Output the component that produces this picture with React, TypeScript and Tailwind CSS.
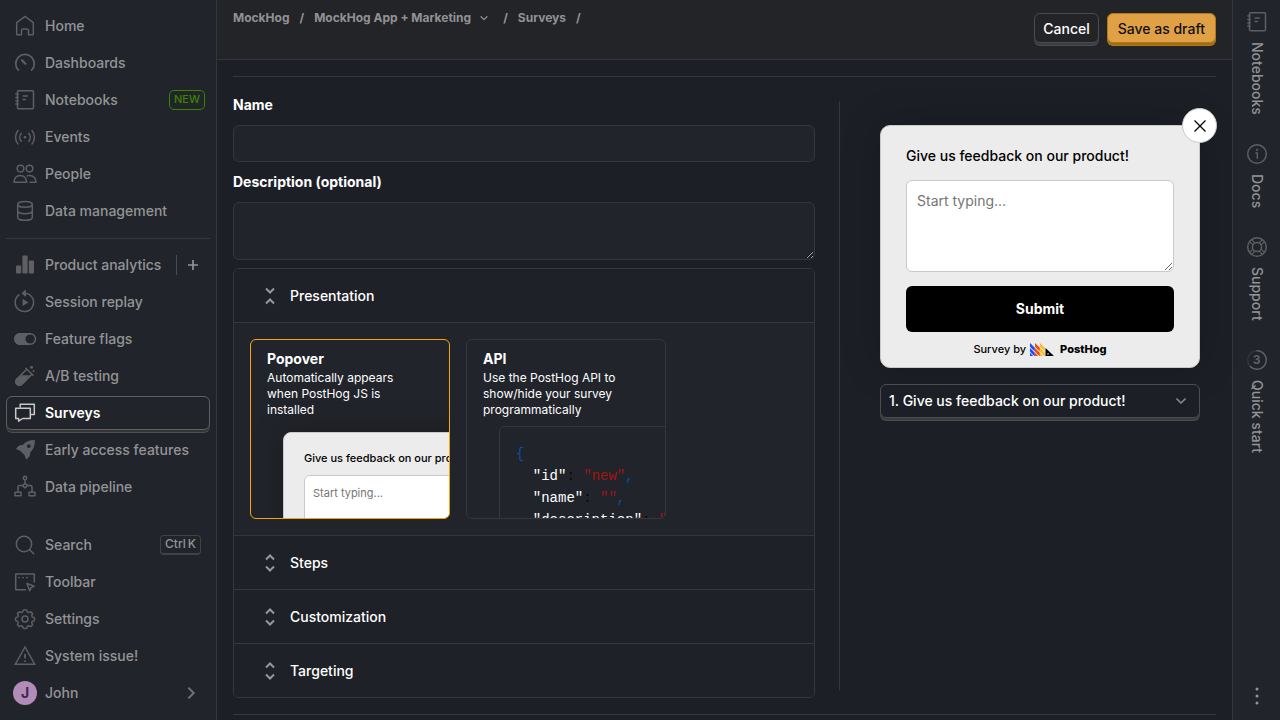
import { useState, type ReactNode } from 'react'

const stroke = {
  fill: 'none',
  stroke: 'currentColor',
  strokeWidth: 1.5,
  strokeLinecap: 'round',
  strokeLinejoin: 'round',
} as const

function Icon({ children, className = 'size-6' }: { children: ReactNode; className?: string }) {
  return (
    <svg viewBox="0 0 24 24" className={`${className} shrink-0`} {...stroke} aria-hidden="true">
      {children}
    </svg>
  )
}

const notebook = (
  <>
    <rect x="4.5" y="2.7" width="16" height="18" rx="1" />
    <path d="M2.8 6h2.4M2.8 9.5h2.4M2.8 13h2.4M2.8 16h2.4M10 8h4.5M10 11.5h2.5" strokeWidth="1.3" />
  </>
)

const icons: Record<string, ReactNode> = {
  home: <path d="M3.7 20.2V8.6L12 2.4l8.3 6.2v11.6a.6.6 0 0 1-.6.6h-4.2v-4.3a1.5 1.5 0 0 0-1.5-1.5h-4a1.5 1.5 0 0 0-1.5 1.5v4.3H4.3a.6.6 0 0 1-.6-.6Z" />,
  dashboards: (
    <>
      <path d="M5.4 19.2a9.25 9.25 0 1 1 13.2 0" strokeWidth="1.7" />
      <path d="M9 9.4l3.4 3.4" strokeWidth="2.2" />
    </>
  ),
  notebook,
  events: (
    <>
      <path d="M5 5.6a10.5 10.5 0 0 0 0 13.4M19 5.6a10.5 10.5 0 0 1 0 13.4M8.2 8.4a6 6 0 0 0 0 7.8M15.8 8.4a6 6 0 0 1 0 7.8" />
      <circle cx="12" cy="12.3" r="1.3" fill="currentColor" stroke="none" />
    </>
  ),
  people: (
    <>
      <circle cx="7.5" cy="6.6" r="3.3" />
      <circle cx="16.5" cy="6.6" r="3.3" />
      <path d="M1 20.2c0-4 2.7-6.8 6.3-6.8s6.3 2.8 6.3 6.8H1ZM14.2 13.9a6 6 0 0 1 2.5-.5c3.6 0 6.3 2.8 6.3 6.8h-6" />
    </>
  ),
  database: (
    <>
      <ellipse cx="12" cy="5.4" rx="7.3" ry="2.8" />
      <path d="M4.7 5.4v13c0 1.6 3.3 2.9 7.3 2.9s7.3-1.3 7.3-2.9v-13M4.7 12c0 1.5 3.3 2.7 7.3 2.7s7.3-1.2 7.3-2.7" />
    </>
  ),
  analytics: (
    <g fill="currentColor" stroke="none">
      <rect x="3" y="12.5" width="5.2" height="8" rx="1" />
      <rect x="9.4" y="2.5" width="5.2" height="18" rx="1" />
      <rect x="15.800" y="7.500" width="5.200" height="13" rx="1" />
    </g>
  ),
  replay: (
    <>
      <path d="M6 4.9a9.200 9.200 0 1 0 6-1.700h-1.500" />
      <path d="M12.2.8 9.6 3.2l2.6 2.500Z" fill="currentColor" />
      <path d="M9.6 8.8v7.2l5.800-3.600Z" fill="currentColor" stroke="none" />
    </>
  ),
  flags: (
    <>
      <rect x="2" y="6.7" width="20.5" height="10.6" rx="5.3" />
      <path d="M7 6.7h10a5.3 5.3 0 0 0 0 10.600H7A5.300 5.300 0 0 1 7 6.700Z" fill="currentColor" />
    </>
  ),
  testing: (
    <>
      <path d="M13.8 5.2 3.9 15.1a3.6 3.6 0 0 0 5.1 5.1l9.9-9.9M12.8 4.2l7.2 7.1" />
      <path d="M8.5 12h8l-7.5 8a3.6 3.6 0 0 1-5.1-5.1Z" fill="currentColor" />
      <circle cx="18.5" cy="3.2" r="1.5" fill="currentColor" stroke="none" />
      <circle cx="20.5" cy="7" r="1" fill="currentColor" stroke="none" />
    </>
  ),
  surveys: (
    <>
      <path d="M7.2 6V3.2h14.100v10.300h-3.200" />
      <path d="M2.7 7.2h14.600v10.300H9.600l-4 2.700v-2.700H2.700Z" />
    </>
  ),
  rocket: (
    <path
      d="M21.8 2.1c.3 5-1 9.200-4.600 12.400.4 2.900-.9 5.100-4 6.900l-1.800-4.300-4.300-4.400L3 11c1.700-3.100 4-4.400 6.700-4C12.700 3.500 16.700 2 21.800 2.100ZM15.800 6.200a1.900 1.900 0 1 0 0 3.800 1.900 1.900 0 0 0 0-3.800Z"
      fill="currentColor"
      fillRule="evenodd"
      stroke="none"
    />
  ),
  pipeline: (
    <>
      <circle cx="12" cy="3" r="1.7" />
      <path d="M12 5v3.200M9.700 10.500H6.500c-1 0-1.500.5-1.500 1.500v5M14.300 10.500h3.200c1 0 1.500.5 1.500 1.500v5M12 8.200l2.500 2.400L12 13l-2.500-2.400Z" />
      <rect x="2" y="17.3" width="6" height="3.4" />
      <rect x="16" y="17.3" width="6" height="3.4" />
    </>
  ),
  search: (
    <>
      <circle cx="11" cy="11" r="7.7" />
      <path d="m16.7 16.7 4 4" />
    </>
  ),
  toolbar: (
    <>
      <path d="M12.5 19.8H2.7V4h18.600v8" />
      <path d="M6 7.6h.1M10 7.6h.1M14 7.6h.1" strokeWidth="1.7" />
      <path d="m14 13.5 7.2 2.7-3.100 1.400-1.400 3.200Z" />
    </>
  ),
  settings: (
    <>
      <path d="M10.3 3.1 12 2.6l1.700.5.7 2 1.300.5 2-.9 1.900 1.900-.9 2 .5 1.300 2 .7.4 1.400-.4 1.700-2 .7-.5 1.300.9 2-1.900 1.900-2-.9-1.300.5-.7 2-1.700.4-1.700-.4-.7-2-1.300-.5-2 .9-1.900-1.900.9-2-.5-1.300-2-.7-.4-1.700.4-1.400 2-.7.5-1.300-.9-2 1.900-1.900 2 .9 1.300-.5Z" />
      <circle cx="12" cy="12" r="3" />
    </>
  ),
  warning: (
    <>
      <path d="M12 3 2.3 20.2h19.400Z" strokeLinejoin="miter" />
      <path d="M12 10v4.500M12 16.500v1.500" strokeWidth="1.8" strokeLinecap="butt" />
    </>
  ),
  info: (
    <>
      <circle cx="12" cy="12" r="9.3" />
      <path d="M11 11h1.300v5.200" />
      <path d="M12 7.8v.1" strokeWidth="2" />
    </>
  ),
  support: (
    <>
      <circle cx="12" cy="12" r="9.3" />
      <circle cx="12" cy="12" r="4.6" />
      <path
        d="m4.6 6.6 3.2 3.2M6.6 4.6l3 3M19.4 6.6l-3.2 3.2M17.4 4.6l-3 3M4.6 17.4l3.2-3.2M6.6 19.4l3-3M19.4 17.4l-3.2-3.2M17.4 19.4l-3-3"
        strokeWidth="1.2"
      />
    </>
  ),
  progress: (
    <>
      <circle cx="12" cy="12" r="9.3" opacity=".3" />
      <path d="M12 2.7a9.3 9.3 0 1 1-6.600 15.900" />
    </>
  ),
}

type Item = { label: string; icon: string; extra?: ReactNode; active?: boolean }

function NavItem({ label, icon, extra, active }: Item) {
  return (
    <li className="flex h-[37px] items-center">
      <a
        href="#"
        aria-current={active ? 'page' : undefined}
        className={
          active
            ? 'flex h-[34px] flex-1 items-center gap-2 rounded-md border border-[#5f6064] px-1.5 font-semibold text-white shadow-[0_2px_0_#343434,0_3px_0_#4f5053]'
            : 'flex h-[34px] flex-1 items-center gap-2 px-[7px] font-medium'
        }
      >
        <span className={active ? 'text-[#c8c8ca]' : 'text-[#5d5f64]'}>
          <Icon>{icons[icon]}</Icon>
        </span>
        {label}
      </a>
      {extra}
    </li>
  )
}

const primary: Item[] = [
  { label: 'Home', icon: 'home' },
  { label: 'Dashboards', icon: 'dashboards' },
  {
    label: 'Notebooks',
    icon: 'notebook',
    extra: (
      <span className="mr-[5px] flex h-5 items-center rounded-[5px] border border-[#388600] px-1 text-[11px] font-medium text-[#388600]">
        NEW
      </span>
    ),
  },
  { label: 'Events', icon: 'events' },
  { label: 'People', icon: 'people' },
  { label: 'Data management', icon: 'database' },
]

const products: Item[] = [
  {
    label: 'Product analytics',
    icon: 'analytics',
    extra: (
      <button type="button" aria-label="New insight" className="flex h-5 items-center border-l border-[#4a4b50] pr-[9px] pl-2">
        <Icon className="size-4">
          <path d="M12 4.5v15M4.5 12h15" strokeWidth="2.5" strokeLinecap="butt" />
        </Icon>
      </button>
    ),
  },
  { label: 'Session replay', icon: 'replay' },
  { label: 'Feature flags', icon: 'flags' },
  { label: 'A/B testing', icon: 'testing' },
  { label: 'Surveys', icon: 'surveys', active: true },
  { label: 'Early access features', icon: 'rocket' },
  { label: 'Data pipeline', icon: 'pipeline' },
]

const utilities: Item[] = [
  {
    label: 'Search',
    icon: 'search',
    extra: (
      <kbd className="mr-[9px] flex h-5 items-center gap-0.5 rounded border border-b-2 border-[#404247] px-1 font-[Inter,sans-serif] text-xs font-medium">
        <span>Ctrl</span>
        <span>K</span>
      </kbd>
    ),
  },
  { label: 'Toolbar', icon: 'toolbar' },
  { label: 'Settings', icon: 'settings' },
  { label: 'System issue!', icon: 'warning' },
]

function Sidebar() {
  return (
    <nav className="flex w-[217px] shrink-0 flex-col border-r border-[#35373e] bg-[#22242b] px-1.5 pt-[7px] pb-[9px] text-[#939496]">
      <ul className="border-b border-[#35373e] pb-[9px]">
        {primary.map((item) => (
          <NavItem key={item.label} {...item} />
        ))}
      </ul>
      <ul className="pt-[7px]">
        {products.map((item) => (
          <NavItem key={item.label} {...item} />
        ))}
      </ul>
      <ul className="mt-auto">
        {utilities.map((item) => (
          <NavItem key={item.label} {...item} />
        ))}
        <li>
          <button type="button" className="flex h-[37px] w-full items-center gap-2 pr-[11px] pl-[7px] font-medium">
            <span className="flex size-6 items-center justify-center rounded-full bg-[#b18cb8] font-bold text-[#43244f]">J</span>
            <span className="flex-1 text-left">John</span>
            <Icon className="size-4">
              <path d="m8 4 8 8-8 8" strokeWidth="3" strokeLinecap="butt" strokeLinejoin="miter" opacity=".7" />
            </Icon>
          </button>
        </li>
      </ul>
    </nav>
  )
}

const railItems = [
  { label: 'Notebooks', icon: 'notebook' },
  { label: 'Docs', icon: 'info' },
  { label: 'Support', icon: 'support' },
  { label: 'Quick start', icon: 'progress' },
]

function Rail() {
  return (
    <aside className="flex w-12 shrink-0 flex-col items-center gap-[15px] border-l border-[#35373e] bg-[#22242b] pt-2.5 pb-3 text-[#939496]">
      {railItems.map(({ label, icon }) => (
        <button key={label} type="button" className="flex flex-col items-center gap-2 pb-3 font-medium">
          <span className="relative text-[#5d5f64]">
            <Icon>{icons[icon]}</Icon>
            {icon === 'progress' && (
              <span className="absolute inset-0 flex items-center justify-center text-xs font-bold">3</span>
            )}
          </span>
          <span className="[writing-mode:vertical-rl]">{label}</span>
        </button>
      ))}
      <button type="button" aria-label="More options" className="mt-auto">
        <Icon>
          <path d="M12 5v.1M12 12v.1M12 19v.1" strokeWidth="3" />
        </Icon>
      </button>
    </aside>
  )
}

function Header() {
  return (
    <header className="flex h-[60px] items-start justify-between border-b border-[#35373e] bg-[#232428] px-4">
      <nav aria-label="Breadcrumb" className="flex items-center gap-2.5 pt-2.5 text-xs font-bold text-[#919294]">
        <a href="#">MockHog</a>
        <span>/</span>
        <a href="#" className="flex items-center gap-2">
          MockHog App + Marketing
          <Icon className="size-2.5">
            <path d="m5 9 7 7 7-7" strokeWidth="3" />
          </Icon>
        </a>
        <span className="ml-1">/</span>
        <a href="#">Surveys</a>
        <span>/</span>
      </nav>
      <div className="flex gap-2 pt-[13px]">
        <button
          type="button"
          className="h-[30px] rounded-md border border-[#4a4c50] px-2 pt-px font-medium text-white shadow-[0_2px_0_#3a3c40,0_3px_0_#4a4c50]"
        >
          Cancel
        </button>
        <button
          type="button"
          className="h-[30px] rounded-md border border-[#b17816] bg-[#e0a045] px-2.5 pt-px font-medium text-[#111] shadow-[0_2px_0_#a06c16,0_3px_0_#b17816]"
        >
          Save as draft
        </button>
      </div>
    </header>
  )
}

function PanelHeader({ label, open, onClick }: { label: string; open: boolean; onClick: () => void }) {
  return (
    <button
      type="button"
      aria-expanded={open}
      onClick={onClick}
      className="flex h-[53px] w-full items-center gap-2 bg-[#1f2128] px-6 font-medium text-white"
    >
      <span className="text-[#97989b]">
        <Icon>
          {open ? (
            <path d="m8 4.5 4 4 4-4M8 19.5l4-4 4 4" strokeWidth="2" strokeLinecap="butt" strokeLinejoin="miter" />
          ) : (
            <path d="m8 8.5 4-4 4 4M8 15.5l4 4 4-4" strokeWidth="2" strokeLinecap="butt" strokeLinejoin="miter" />
          )}
        </Icon>
      </span>
      {label}
    </button>
  )
}

function Blue({ children }: { children: ReactNode }) {
  return <span className="text-[#0451a5]">{children}</span>
}

function CodeField({ name, value }: { name: string; value: string }) {
  return (
    <>
      {'\n  '}
      <span className="text-white">{`"${name}"`}</span>
      {': '}
      <span className="text-[#a31515]">{`"${value}"`}</span>
      <Blue>,</Blue>
    </>
  )
}

function Presentation() {
  return (
    <div className="flex gap-4 border-t border-[#35373e] bg-[#22242b] p-4">
      <div className="flex h-[180px] w-[200px] flex-col overflow-hidden rounded-md border border-[#f7a501] px-4 pt-2 text-white">
        <h3 className="leading-[22px] font-bold">Popover</h3>
        <p className="pr-4 text-xs leading-4">Automatically appears when PostHog JS is installed</p>
        <div className="mt-3.5 ml-4 w-64 shrink-0 rounded-lg border border-[#c9c9c9] bg-[#ececec] px-5 pt-4 text-[11px] text-black shadow-[0_0_30px_rgba(0,0,0,0.25)]">
          <p className="leading-[18px] font-medium whitespace-nowrap">Give us feedback on our product!</p>
          <div className="mt-2 h-[74px] rounded-md border border-[#c9c9c9] bg-white px-2 py-2 leading-[18px] text-[#757575]">
            Start typing...
          </div>
        </div>
      </div>
      <div className="flex h-[180px] w-[200px] flex-col overflow-hidden rounded-md border border-[#35373e] px-4 pt-2 text-white">
        <h3 className="leading-[22px] font-bold">API</h3>
        <p className="text-xs leading-4">Use the PostHog API to show/hide your survey programmatically</p>
        <pre className="mt-2 ml-4 w-64 shrink-0 rounded-md border border-[#35373e] p-4 font-['Liberation_Mono',monospace] text-sm leading-[22px] text-[#08090b]">
          <Blue>{'{'}</Blue>
          <CodeField name="id" value="new" />
          <CodeField name="name" value="" />
          <CodeField name="description" value="" />
        </pre>
      </div>
    </div>
  )
}

function Logo() {
  return (
    <svg viewBox="0 0 24 13" className="h-[13px] w-6" aria-hidden="true">
      <path d="M0 0l4.800 4.800v3.800L0 3.800ZM0 4.900l4.800 4.800V13h-.5L0 8.700ZM0 9.800 3.200 13H0Z" fill="#1d4aff" />
      <path d="M5 0l4.800 4.800v3.800L5 3.800ZM5 4.900l4.800 4.800V13h-.5L5 8.700ZM5 9.800 8.200 13H5Z" fill="#f54e00" />
      <path d="M10 0l4.800 4.800v3.800L10 3.800ZM10 4.900l4.800 4.800V13h-.5L10 8.700ZM10 9.800l3.200 3.200H10Z" fill="#f9bd2b" />
      <path d="M15.500 5l8 7.500V13h-8ZM18 10.200a.8.8 0 1 0 0 1.600.8.8 0 0 0 0-1.600Z" fill="#000" fillRule="evenodd" />
    </svg>
  )
}

function Preview() {
  return (
    <div className="w-[352px] shrink-0 px-4 pt-8">
      <form
        onSubmit={(e) => e.preventDefault()}
        className="relative rounded-[10px] border border-[#c9c9c9] bg-[#ececec] px-[25px] pt-5 pb-2 text-black shadow-[0_0_40px_rgba(0,0,0,0.2)]"
      >
        <button
          type="button"
          aria-label="Close"
          className="absolute -top-[18px] -right-[18px] flex size-[35px] items-center justify-center rounded-full border border-[#c9c9c9] bg-white"
        >
          <svg viewBox="0 0 12 12" className="size-3" stroke="#000" strokeWidth="1.3" aria-hidden="true">
            <path d="m.5.5 11 11M11.5.5l-11 11" />
          </svg>
        </button>
        <label htmlFor="answer" className="block font-medium">
          Give us feedback on our product!
        </label>
        <textarea
          id="answer"
          placeholder="Start typing..."
          className="mt-3.5 block h-[92px] w-full rounded-md border border-[#c9c9c9] bg-white p-2.5 placeholder:text-[#757575]"
        />
        <button type="submit" className="mt-3.5 h-[46px] w-full rounded-md bg-black font-bold text-white">
          Submit
        </button>
        <a href="#" className="mt-2 flex h-[19px] items-center justify-center gap-1 text-[11px] font-medium">
          Survey by
          <span className="flex items-center gap-1.5">
            <Logo />
            <span className="leading-none font-extrabold">PostHog</span>
          </span>
        </a>
      </form>
      <div className="relative mt-4">
        <select
          aria-label="Question"
          className="h-[34px] w-full appearance-none rounded-md border border-[#4a4c50] bg-[#1d1f27] px-2 font-medium text-white shadow-[0_2px_0_#3a3c40,0_3px_0_#4a4c50]"
        >
          <option>1. Give us feedback on our product!</option>
        </select>
        <span className="pointer-events-none absolute top-2.5 right-3 text-[#87888b]">
          <Icon className="size-3.5">
            <path d="m5 8.500 7 7 7-7" strokeWidth="2.8" />
          </Icon>
        </span>
      </div>
    </div>
  )
}

export default function App() {
  const [open, setOpen] = useState('Presentation')
  return (
    <div className="flex min-h-screen bg-[#1d1f27] font-[Inter,sans-serif] text-sm">
      <Sidebar />
      <div className="min-w-0 flex-1">
        <Header />
        <main className="px-4 pt-4">
          <div className="flex border-y border-[#35373e] py-4">
            <div className="min-w-0 flex-1">
              <label htmlFor="name" className="block leading-6 font-bold text-white">
                Name
              </label>
              <input id="name" className="mt-2 block h-[37px] w-full rounded-md border border-[#35373e] bg-[#22242b] px-2 text-white" />
              <label htmlFor="description" className="mt-2 block leading-6 font-bold text-white">
                Description (optional)
              </label>
              <textarea
                id="description"
                className="mt-2 block h-[58px] w-full rounded-md border border-[#35373e] bg-[#22242b] p-2 text-white"
              />
              <div className="mt-2 divide-y divide-[#35373e] overflow-hidden rounded-md border border-[#35373e]">
                {['Presentation', 'Steps', 'Customization', 'Targeting'].map((label) => (
                  <section key={label}>
                    <PanelHeader label={label} open={open === label} onClick={() => setOpen(open === label ? '' : label)} />
                    {label === 'Presentation' && open === label && <Presentation />}
                  </section>
                ))}
              </div>
            </div>
            <div className="mx-6 my-2 w-px bg-[#35373e]" />
            <Preview />
          </div>
        </main>
      </div>
      <Rail />
    </div>
  )
}
